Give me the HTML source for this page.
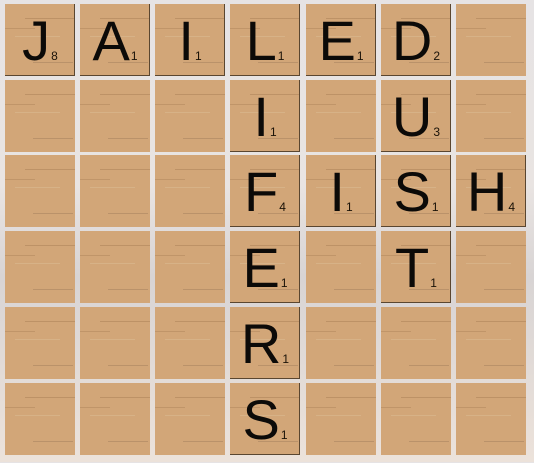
<!DOCTYPE html>
<html><head><style>
html,body{margin:0;padding:0}
body{width:534px;height:462px;overflow:hidden;position:relative;background:linear-gradient(180deg,#e6e3e4 0%,#e9e4e2 40%,#d8d4d4 60%,#ece2da 100%);font-family:"Liberation Sans",sans-serif}
.t{position:absolute;width:70px;height:72px;background:#d2a678;
background-image:
linear-gradient(transparent 14px,rgba(150,110,70,.35) 14px,rgba(150,110,70,.35) 15px,transparent 15px),
linear-gradient(transparent 24px,rgba(150,110,70,.3) 24px,rgba(150,110,70,.3) 25px,transparent 25px),
linear-gradient(transparent 32px,rgba(220,190,150,.5) 32px,rgba(220,190,150,.5) 33px,transparent 33px),
linear-gradient(transparent 58px,rgba(140,110,80,.35) 58px,rgba(140,110,80,.35) 59px,transparent 59px);
background-size:50px 72px,30px 72px,45px 72px,40px 72px;background-position:20px 0,0 0,10px 0,28px 0;background-repeat:no-repeat}
.l{box-shadow:inset -1px -1px 0 #5a4630}
.c{position:absolute;left:0;width:70px;text-align:center;top:9px;font-size:56px;line-height:56px;color:#0c0a08;white-space:nowrap}
.s{font-size:12px;color:#1a1208;margin-left:1px}
</style></head><body>
<div id="g"></div>
<script>
var X=[5,80,155,230,306,381,456],Y=[4,80,155,231,307,383];
var L={"0,0":["J","8"],"0,1":["A","1"],"0,2":["I","1"],"0,3":["L","1"],"0,4":["E","1"],"0,5":["D","2"],
"1,3":["I","1"],"1,5":["U","3"],
"2,3":["F","4"],"2,4":["I","1"],"2,5":["S","1"],"2,6":["H","4"],
"3,3":["E","1"],"3,5":["T","1"],"4,3":["R","1"],"5,3":["S","1"]};
var h="";
for(var r=0;r<6;r++)for(var c=0;c<7;c++){var k=r+","+c,v=L[k];
h+='<div class="t'+(v?' l':'')+'" style="left:'+X[c]+'px;top:'+Y[r]+'px">';
if(v){h+='<div class="c">'+v[0]+'<span class="s">'+v[1]+'</span></div>';}
h+='</div>';}
document.getElementById("g").innerHTML=h;
</script>
</body></html>
